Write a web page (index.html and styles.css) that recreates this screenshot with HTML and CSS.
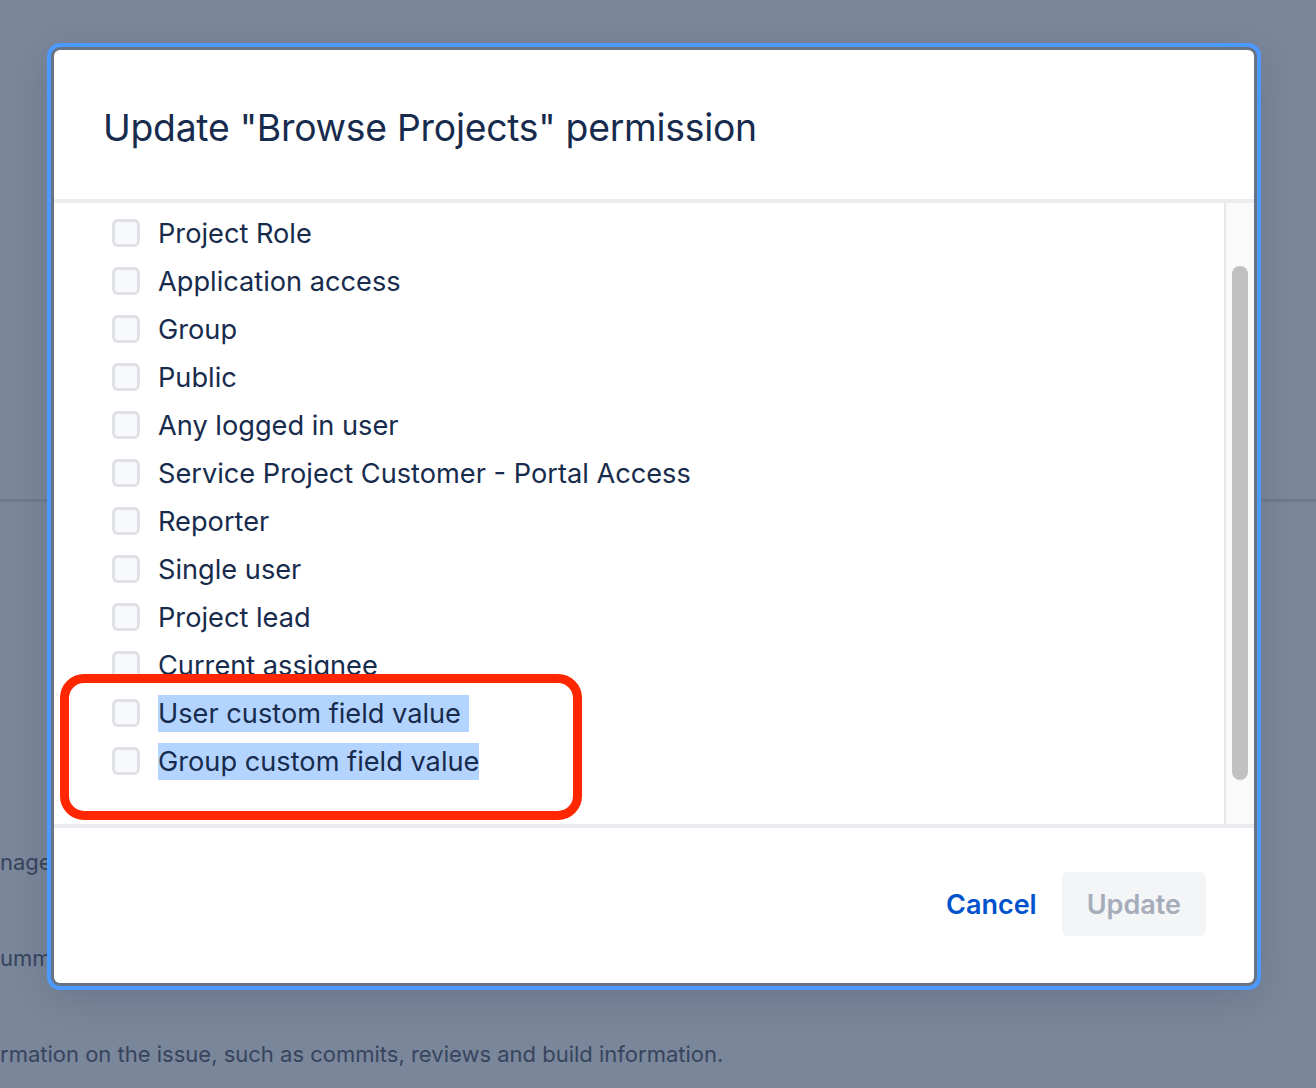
FILE: index.html
```html
<!DOCTYPE html>
<html lang="en">
<head>
<meta charset="utf-8">
<title>Update "Browse Projects" permission</title>
<link rel="stylesheet" href="styles.css">
</head>
<body>
<div class="page">
  <div class="page-top"></div>
  <div class="page-rows">
    <p class="bg-text bg-1">nagers can administer</p>
    <p class="bg-text bg-2">ummary of the project</p>
    <p class="bg-text bg-3">rmation on the issue, such as commits, reviews and build information.</p>
  </div>
</div>

<div class="modal" role="dialog">
  <header class="modal-header">
    <h1 class="modal-title">Update "Browse Projects" permission</h1>
  </header>
  <div class="modal-body">
    <ul class="options">
      <li class="option"><span class="box"></span><span class="label">Project Role</span></li>
      <li class="option"><span class="box"></span><span class="label">Application access</span></li>
      <li class="option"><span class="box"></span><span class="label">Group</span></li>
      <li class="option"><span class="box"></span><span class="label">Public</span></li>
      <li class="option"><span class="box"></span><span class="label">Any logged in user</span></li>
      <li class="option"><span class="box"></span><span class="label">Service Project Customer - Portal Access</span></li>
      <li class="option"><span class="box"></span><span class="label">Reporter</span></li>
      <li class="option"><span class="box"></span><span class="label">Single user</span></li>
      <li class="option"><span class="box"></span><span class="label">Project lead</span></li>
      <li class="option"><span class="box"></span><span class="label">Current assignee</span></li>
      <li class="option"><span class="box"></span><span class="label"><span class="sel">User custom field value&nbsp;</span></span></li>
      <li class="option"><span class="box"></span><span class="label"><span class="sel">Group custom field value</span></span></li>
    </ul>
    <div class="scrollbar"><div class="thumb"></div></div>
  </div>
  <footer class="modal-footer">
    <button class="btn btn-link">Cancel</button>
    <button class="btn btn-disabled" disabled>Update</button>
  </footer>
  <div class="annotation"></div>
</div>
</body>
</html>
```

FILE: styles.css
```css
* { box-sizing: border-box; }

html, body {
  margin: 0;
  padding: 0;
}

body {
  width: 1316px;
  height: 1088px;
  overflow: hidden;
  background: #7a8699;
  font-family: Inter, "Noto Sans", "Liberation Sans", sans-serif;
  position: relative;
}

.page {
  width: 100%;
  height: 100%;
}

.page-top {
  height: 502px;
  border-bottom: 3px solid #6f7a8e;
}

.page-rows {
  display: flex;
  flex-direction: column;
  padding-top: 347px;
}

.bg-text {
  margin: 0;
  font-size: 22px;
  line-height: 26px;
  color: #37445e;
  white-space: nowrap;
}

.bg-2 { margin-top: 70px; }
.bg-3 { margin-top: 70px; }

.modal {
  position: absolute;
  left: 54px;
  top: 50px;
  width: 1200px;
  height: 933px;
  background: #fff;
  border-radius: 6px;
  box-shadow: 0 0 0 3px #697386, 0 0 0 7px #4c9aff, 0 10px 40px rgba(9, 30, 66, 0.18);
  display: flex;
  flex-direction: column;
}

.modal-header {
  height: 153px;
  padding-left: 49px;
  display: flex;
  align-items: center;
  border-bottom: 4px solid #ebecf0;
  flex: none;
}

.modal-title {
  margin: 0;
  padding-top: 6px;
  font-size: 37.3px;
  font-weight: 400;
  color: #172b4d;
  letter-spacing: -0.25px;
}

.modal-body {
  height: 625px;
  flex: none;
  display: flex;
  border-bottom: 4px solid #ebecf0;
  overflow: hidden;
}

.options {
  list-style: none;
  margin: 0;
  padding: 6px 0 0 58px;
  flex: 1;
  overflow: hidden;
}

.option {
  height: 48px;
  display: flex;
  align-items: center;
  gap: 18px;
}

.box {
  width: 28px;
  height: 28px;
  flex: none;
  border: 3px solid #dfe1e6;
  background: #f8f9fb;
  border-radius: 6px;
}

.label {
  font-size: 27.2px;
  color: #172b4d;
  white-space: nowrap;
}

.sel {
  background: #b3d4ff;
  padding: 2px 0;
}

.scrollbar {
  width: 30px;
  flex: none;
  background: #fafafa;
  border-left: 2px solid #e8e8e8;
  padding: 63px 0 0 6px;
}

.thumb {
  width: 16px;
  height: 514px;
  background: #c1c1c1;
  border-radius: 8px;
}

.modal-footer {
  flex: 1;
  display: flex;
  justify-content: flex-end;
  align-items: flex-start;
  padding: 44px 48px 0 0;
  gap: 1px;
}

.btn {
  height: 64px;
  border: 0;
  border-radius: 6px;
  font-family: inherit;
  font-size: 27px;
  font-weight: 600;
  padding: 0 24px;
  background: transparent;
}

.btn-link {
  color: #0052cc;
}

.btn-disabled {
  background: #f4f5f7;
  color: #a5adba;
  padding: 0 25px;
}

.annotation {
  position: absolute;
  left: 6px;
  top: 624px;
  width: 522px;
  height: 146px;
  border: 9px solid #ff2600;
  border-radius: 24px;
  pointer-events: none;
}
```
